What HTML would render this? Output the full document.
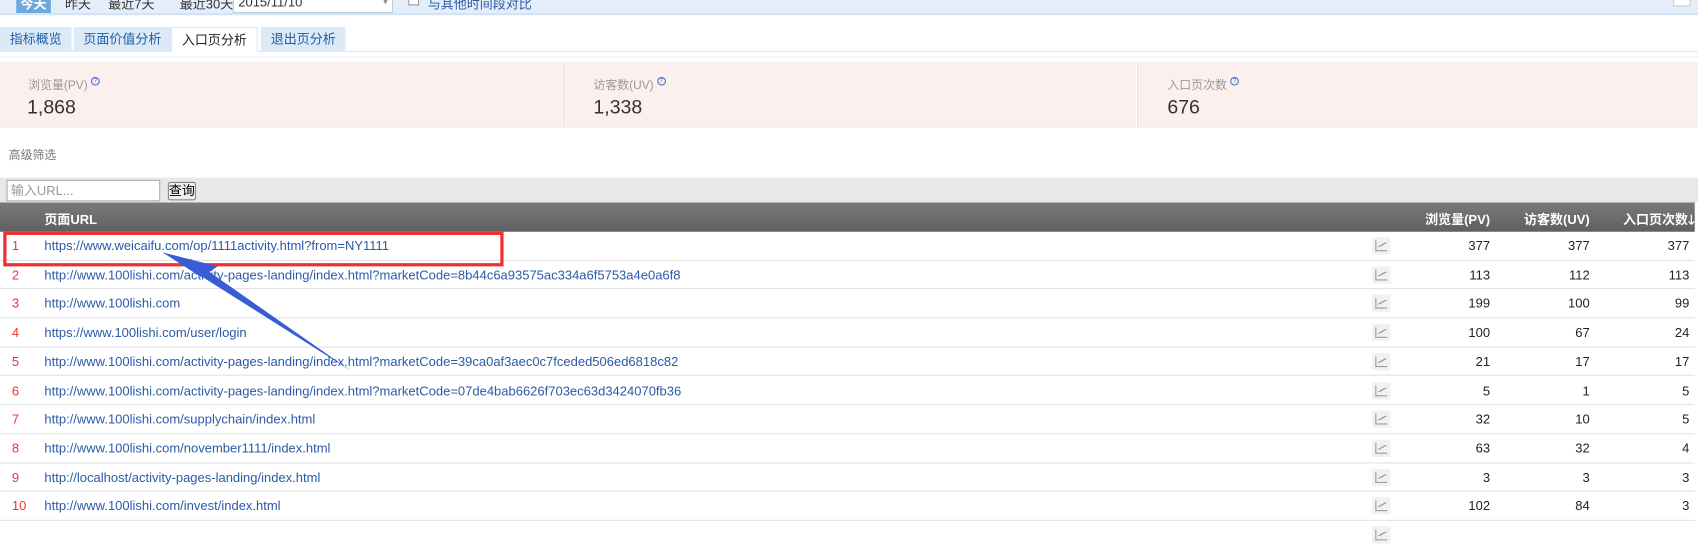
<!DOCTYPE html>
<html><head><meta charset="utf-8"><style>
*{margin:0;padding:0;box-sizing:border-box}
body{width:1698px;height:527px;overflow:hidden;background:#fff;font-family:"Liberation Sans","Noto Sans CJK SC",sans-serif;font-size:12px;position:relative}
#w{position:absolute;left:0;top:0;width:1568px;height:487px;transform:scale(1.08291);transform-origin:0 0}
.a{position:absolute;white-space:nowrap}
.topbar{left:0;top:0;width:1568px;height:14px;background:#e4eefa;border-bottom:2px solid #d2e3f5}
.tab{top:25px;height:22px;line-height:22px;background:#dce9f7;color:#1d5fa6;padding:0 9px;font-size:12px}
.stat{top:57px;height:61px;background:#fcf0ee;border-top:1px solid #eee;border-bottom:1px solid #eee}
.lbl{color:#999;font-size:11px}
.val{color:#333;font-size:18px}
.q{display:inline-block;width:8px;height:8px;border:1px solid #4a6fd0;border-radius:50%;font-size:6px;line-height:6px;text-align:center;color:#4a6fd0;vertical-align:top;margin-left:3px;margin-top:1px}
.hdr{left:0;top:187px;width:1565px;height:27px;background:linear-gradient(#7a7a7a,#5f5f5f);color:#fff;font-weight:bold}
.row{left:0;width:1565px;height:26.7px;border-bottom:1px solid #e2e2e2;line-height:26px}
.row .n{position:absolute;left:11px;color:#e33}
.row .u{position:absolute;left:41px;color:#2a5aa8}
.row .c{position:absolute;left:1267px;top:5px;width:17px;height:16px;background:#f1f1f1}
.row .v{position:absolute;text-align:right;width:80px;color:#222}
</style></head><body><div id="w">
<div class="a topbar"></div>
<div class="a" style="left:15px;top:0;width:32px;height:12px;background:#6fa8dc;color:#fff;text-align:center;line-height:8px;font-weight:bold">今天</div>
<div class="a" style="left:60px;top:-5px;color:#333">昨天</div>
<div class="a" style="left:100px;top:-5px;color:#333">最近7天</div>
<div class="a" style="left:166px;top:-5px;color:#333">最近30天</div>
<div class="a" style="left:215px;top:0;width:148px;height:12px;background:#fff;border:1px solid #bcd;border-top:0;line-height:4px;padding-left:4px;color:#333">2015/11/10<span style="position:absolute;right:4px;color:#888;font-size:8px">▾</span></div>
<div class="a" style="left:377px;top:0;width:10px;height:5px;border:1px solid #999;border-top:0;background:#fff"></div>
<div class="a" style="left:395px;top:-5px;color:#2a5aa8">与其他时间段对比</div>
<div class="a" style="left:1545px;top:0;width:16px;height:6px;border:1px solid #ccc;border-top:0;background:#fff"></div>
<div class="a" style="left:0;top:47px;width:1568px;height:1px;background:#dfe8f2"></div>
<div class="a tab" style="left:0">指标概览</div>
<div class="a tab" style="left:68px">页面价值分析</div>
<div class="a tab" style="left:158px;background:#fff;color:#222;border:1px solid #dfe8f2;border-bottom:0;height:23px">入口页分析</div>
<div class="a tab" style="left:241px">退出页分析</div>
<div class="a" style="left:0;top:52px;width:1568px;height:1px;background:#eef2f6"></div>
<div class="a stat" style="left:0;width:519px"></div>
<div class="a stat" style="left:520px;width:529px;border-left:1px solid #eadcdc"></div>
<div class="a stat" style="left:1050px;width:518px;border-left:1px solid #eadcdc"></div>
<div class="a lbl" style="left:26px;top:70px">浏览量(PV)<span class="q">?</span></div>
<div class="a val" style="left:25px;top:89px">1,868</div>
<div class="a lbl" style="left:548px;top:70px">访客数(UV)<span class="q">?</span></div>
<div class="a val" style="left:548px;top:89px">1,338</div>
<div class="a lbl" style="left:1078px;top:70px">入口页次数<span class="q">?</span></div>
<div class="a val" style="left:1078px;top:89px">676</div>
<div class="a lbl" style="left:8px;top:135px;color:#777">高级筛选</div>
<div class="a" style="left:0;top:164px;width:1568px;height:23px;background:#e8e8e8"></div>
<div class="a" style="left:6px;top:166px;width:142px;height:20px;background:#fff;border:1px solid #aaa;color:#999;line-height:18px;padding-left:3px">输入URL...</div>
<div class="a" style="left:155px;top:168px;width:26px;height:17px;background:#eee;border:1px solid #888;border-radius:2px;line-height:15px;text-align:center;color:#000">查询</div>
<div class="a hdr"><span class="a" style="left:41px;top:7px">页面URL</span><span class="a" style="left:1296px;top:7px;width:80px;text-align:right">浏览量(PV)</span><span class="a" style="left:1388px;top:7px;width:80px;text-align:right">访客数(UV)</span><span class="a" style="left:1480px;top:7px;width:85px;text-align:right">入口页次数🡓</span></div>
<div class="a row" style="top:214px"><span class="n">1</span><span class="u">https://www.weicaifu.com/op/1111activity.html?from=NY1111</span><i class="c"></i><span class="v" style="left:1296px">377</span><span class="v" style="left:1388px">377</span><span class="v" style="left:1480px">377</span></div>
<div class="a row" style="top:240.7px"><span class="n">2</span><span class="u">http://www.100lishi.com/activity-pages-landing/index.html?marketCode=8b44c6a93575ac334a6f5753a4e0a6f8</span><i class="c"></i><span class="v" style="left:1296px">113</span><span class="v" style="left:1388px">112</span><span class="v" style="left:1480px">113</span></div>
<div class="a row" style="top:267.4px"><span class="n">3</span><span class="u">http://www.100lishi.com</span><i class="c"></i><span class="v" style="left:1296px">199</span><span class="v" style="left:1388px">100</span><span class="v" style="left:1480px">99</span></div>
<div class="a row" style="top:294.1px"><span class="n">4</span><span class="u">https://www.100lishi.com/user/login</span><i class="c"></i><span class="v" style="left:1296px">100</span><span class="v" style="left:1388px">67</span><span class="v" style="left:1480px">24</span></div>
<div class="a row" style="top:320.8px"><span class="n">5</span><span class="u">http://www.100lishi.com/activity-pages-landing/index.html?marketCode=39ca0af3aec0c7fceded506ed6818c82</span><i class="c"></i><span class="v" style="left:1296px">21</span><span class="v" style="left:1388px">17</span><span class="v" style="left:1480px">17</span></div>
<div class="a row" style="top:347.5px"><span class="n">6</span><span class="u">http://www.100lishi.com/activity-pages-landing/index.html?marketCode=07de4bab6626f703ec63d3424070fb36</span><i class="c"></i><span class="v" style="left:1296px">5</span><span class="v" style="left:1388px">1</span><span class="v" style="left:1480px">5</span></div>
<div class="a row" style="top:374.2px"><span class="n">7</span><span class="u">http://www.100lishi.com/supplychain/index.html</span><i class="c"></i><span class="v" style="left:1296px">32</span><span class="v" style="left:1388px">10</span><span class="v" style="left:1480px">5</span></div>
<div class="a row" style="top:400.9px"><span class="n">8</span><span class="u">http://www.100lishi.com/november1111/index.html</span><i class="c"></i><span class="v" style="left:1296px">63</span><span class="v" style="left:1388px">32</span><span class="v" style="left:1480px">4</span></div>
<div class="a row" style="top:427.6px"><span class="n">9</span><span class="u">http://localhost/activity-pages-landing/index.html</span><i class="c"></i><span class="v" style="left:1296px">3</span><span class="v" style="left:1388px">3</span><span class="v" style="left:1480px">3</span></div>
<div class="a row" style="top:454.3px"><span class="n">10</span><span class="u">http://www.100lishi.com/invest/index.html</span><i class="c"></i><span class="v" style="left:1296px">102</span><span class="v" style="left:1388px">84</span><span class="v" style="left:1480px">3</span></div>
<div class="a row" style="top:481px;border:0"><i class="c"></i></div>
<div class="a" style="left:3px;top:214px;width:462px;height:32px;border:3px solid #f03030"></div>
<svg class="a" style="left:0;top:0" width="1568" height="487">
<polygon points="325,343 170,245 176,239" fill="#3a5bd6"/>
<polygon points="150,233 201,246 186,256" fill="#3a5bd6"/>
</svg>
</div>
<style>
.row .c::after{content:"";position:absolute;left:3px;top:3px;width:10px;height:9px;border-left:1.5px solid #999;border-bottom:1.5px solid #999}
.row .c::before{content:"";position:absolute;left:5px;top:5px;width:9px;height:4px;background:linear-gradient(150deg,transparent 40%,#999 45%,#999 55%,transparent 60%)}
</style>
</body></html>
